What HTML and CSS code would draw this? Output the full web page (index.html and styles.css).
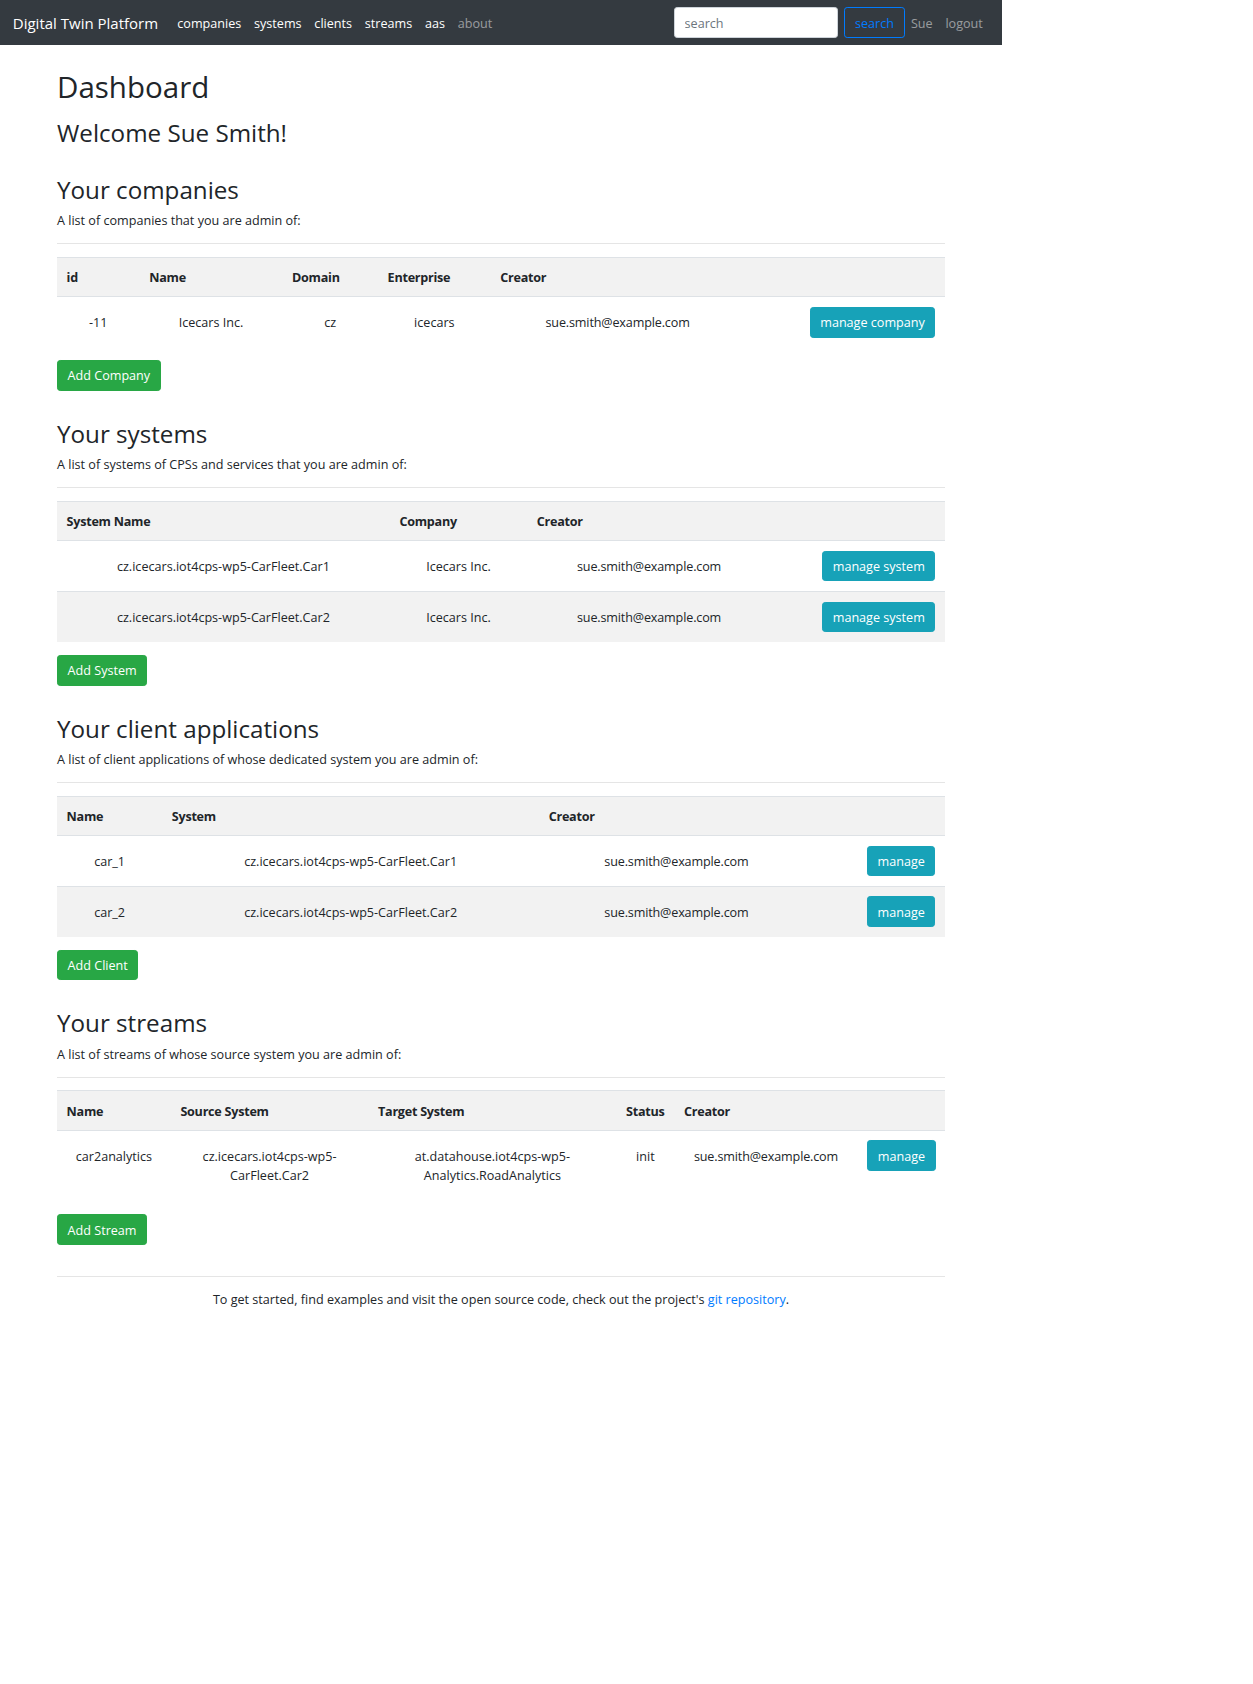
FILE: index.html
```html
<!DOCTYPE html>
<html lang="en">
<head>
<meta charset="utf-8">
<title>Digital Twin Platform</title>
<link rel="stylesheet" href="styles.css">
</head>
<body>
<div class="page">
  <nav class="navbar">
    <a class="brand" href="#">Digital Twin Platform</a>
    <ul class="nav nav-main">
      <li><a class="nav-link active" href="#">companies</a></li>
      <li><a class="nav-link active" href="#">systems</a></li>
      <li><a class="nav-link active" href="#">clients</a></li>
      <li><a class="nav-link active" href="#">streams</a></li>
      <li><a class="nav-link active" href="#">aas</a></li>
      <li><a class="nav-link" href="#">about</a></li>
    </ul>
    <form class="search-form">
      <input class="search-input" type="search" placeholder="search">
      <button class="btn btn-outline" type="button">search</button>
    </form>
    <ul class="nav">
      <li><a class="nav-link" href="#">Sue</a></li>
      <li><a class="nav-link" href="#">logout</a></li>
    </ul>
  </nav>

  <main class="container">
    <h1 class="title">Dashboard</h1>
    <h2 class="welcome">Welcome Sue Smith!</h2>

    <section class="section first">
      <h2 class="section-title">Your companies</h2>
      <p class="lead-text">A list of companies that you are admin of:</p>
      <hr class="rule">
      <table class="table">
        <colgroup>
          <col class="w-co-id"><col class="w-co-name"><col class="w-co-domain"><col class="w-co-ent"><col class="w-co-creator"><col class="w-co-act">
        </colgroup>
        <thead>
          <tr><th>id</th><th>Name</th><th>Domain</th><th>Enterprise</th><th>Creator</th><th></th></tr>
        </thead>
        <tbody>
          <tr><td>-11</td><td>Icecars Inc.</td><td>cz</td><td>icecars</td><td class="email">sue.smith@example.com</td><td class="act"><a class="btn btn-info" href="#">manage company</a></td></tr>
        </tbody>
      </table>
      <a class="btn btn-success" href="#">Add Company</a>
    </section>

    <section class="section">
      <h2 class="section-title">Your systems</h2>
      <p class="lead-text">A list of systems of CPSs and services that you are admin of:</p>
      <hr class="rule">
      <table class="table">
        <colgroup>
          <col class="w-sy-name"><col class="w-sy-co"><col class="w-sy-creator"><col class="w-sy-act">
        </colgroup>
        <thead>
          <tr><th>System Name</th><th>Company</th><th>Creator</th><th></th></tr>
        </thead>
        <tbody>
          <tr><td>cz.icecars.iot4cps-wp5-CarFleet.Car1</td><td>Icecars Inc.</td><td class="email">sue.smith@example.com</td><td class="act"><a class="btn btn-info" href="#">manage system</a></td></tr>
          <tr class="striped"><td>cz.icecars.iot4cps-wp5-CarFleet.Car2</td><td>Icecars Inc.</td><td class="email">sue.smith@example.com</td><td class="act"><a class="btn btn-info" href="#">manage system</a></td></tr>
        </tbody>
      </table>
      <a class="btn btn-success" href="#">Add System</a>
    </section>

    <section class="section">
      <h2 class="section-title">Your client applications</h2>
      <p class="lead-text">A list of client applications of whose dedicated system you are admin of:</p>
      <hr class="rule">
      <table class="table">
        <colgroup>
          <col class="w-cl-name"><col class="w-cl-sys"><col class="w-cl-creator"><col class="w-cl-act">
        </colgroup>
        <thead>
          <tr><th>Name</th><th>System</th><th>Creator</th><th></th></tr>
        </thead>
        <tbody>
          <tr><td>car_1</td><td>cz.icecars.iot4cps-wp5-CarFleet.Car1</td><td class="email">sue.smith@example.com</td><td class="act"><a class="btn btn-info" href="#">manage</a></td></tr>
          <tr class="striped"><td>car_2</td><td>cz.icecars.iot4cps-wp5-CarFleet.Car2</td><td class="email">sue.smith@example.com</td><td class="act"><a class="btn btn-info" href="#">manage</a></td></tr>
        </tbody>
      </table>
      <a class="btn btn-success" href="#">Add Client</a>
    </section>

    <section class="section">
      <h2 class="section-title">Your streams</h2>
      <p class="lead-text">A list of streams of whose source system you are admin of:</p>
      <hr class="rule">
      <table class="table table-streams">
        <colgroup>
          <col class="w-st-name"><col class="w-st-src"><col class="w-st-tgt"><col class="w-st-status"><col class="w-st-creator"><col class="w-st-act">
        </colgroup>
        <thead>
          <tr><th>Name</th><th>Source System</th><th>Target System</th><th>Status</th><th>Creator</th><th></th></tr>
        </thead>
        <tbody>
          <tr><td>car2analytics</td><td>cz.icecars.iot4cps-wp5-CarFleet.Car2</td><td>at.datahouse.iot4cps-wp5-Analytics.RoadAnalytics</td><td>init</td><td class="email">sue.smith@example.com</td><td class="act"><a class="btn btn-info" href="#">manage</a></td></tr>
        </tbody>
      </table>
      <a class="btn btn-success" href="#">Add Stream</a>
    </section>

    <footer class="footer">
      <hr class="rule">
      <p class="footer-text">To get started, find examples and visit the open source code, check out the project's <a href="#" class="link">git repository</a>.</p>
    </footer>
  </main>
</div>
</body>
</html>
```
FILE: styles.css
```css
* { box-sizing: border-box; }

html, body {
  margin: 0;
  padding: 0;
  background: #fff;
}

body {
  font-family: "Open Sans", "Noto Sans", sans-serif;
  font-size: 12.6px;
  line-height: 19.2px;
  color: #212529;
}

.page {
  width: 1002px;
}

/* ---------- navbar ---------- */
.navbar {
  display: flex;
  align-items: center;
  height: 45px;
  padding: 0 12.8px;
  background: #343a40;
}

.brand {
  color: #fff;
  text-decoration: none;
  font-size: 15px;
  line-height: 24px;
  padding: 4px 0;
  margin-right: 12.8px;
  white-space: nowrap;
}

.nav {
  display: flex;
  list-style: none;
  margin: 0;
  padding: 0;
}

.nav-main {
  margin-right: auto;
}

.nav-link {
  display: block;
  padding: 7.4px 6.4px 5.4px;
  color: rgba(255, 255, 255, 0.5);
  text-decoration: none;
  white-space: nowrap;
}

.nav-link.active {
  color: #fff;
}

.search-form {
  display: flex;
  align-items: center;
}

.search-input {
  width: 164px;
  height: 30.4px;
  padding: 5.4px 9.6px 4.2px;
  margin: 0 6.4px 0 0;
  font-family: inherit;
  font-size: 12.6px;
  line-height: 19.2px;
  color: #495057;
  background: #fff;
  border: 1px solid #ced4da;
  border-radius: 3.2px;
  outline: none;
}

.search-input::placeholder {
  color: #6c757d;
  opacity: 1;
}

/* ---------- buttons ---------- */
.btn {
  display: inline-block;
  padding: 5.4px 9.6px 4.2px;
  font-family: inherit;
  font-size: 12.6px;
  line-height: 19.2px;
  font-weight: 400;
  text-align: center;
  white-space: nowrap;
  border: 1px solid transparent;
  border-radius: 3.2px;
  text-decoration: none;
  cursor: pointer;
}

.btn-outline {
  color: #007bff;
  background: transparent;
  border-color: #007bff;
}

.btn-info {
  color: #fff;
  background: #17a2b8;
  border-color: #17a2b8;
}

.btn-success {
  color: #fff;
  background: #28a745;
  border-color: #28a745;
}

/* ---------- content ---------- */
.container {
  display: block;
  width: 912px;
  margin: 0 auto;
  padding: 23px 12px 0;
}

.title {
  margin: 0;
  font-size: 29.5px;
  line-height: 38.4px;
  font-weight: 400;
}

.welcome {
  margin: 11.6px 0 0;
  font-size: 24.2px;
  line-height: 30.7px;
  font-weight: 400;
}

.section {
  margin-top: 27px;
}

.section.first {
  margin-top: 25.3px;
}

.section-title {
  margin: 0 0 5.4px;
  padding-top: 1px;
  font-size: 24.2px;
  line-height: 30.7px;
  font-weight: 400;
}

.lead-text {
  margin: 0 0 12.8px;
}

.rule {
  height: 0;
  margin: 0 0 12.8px;
  border: 0;
  border-top: 1px solid rgba(0, 0, 0, 0.1);
}

/* ---------- tables ---------- */
.table {
  width: 888px;
  table-layout: fixed;
  border-collapse: collapse;
  margin-bottom: 12.8px;
}

.table th,
.table td {
  padding: 9.6px;
  border-top: 1px solid #dee2e6;
}

.table th {
  padding-top: 10.6px;
  padding-bottom: 8.6px;
  text-align: left;
  vertical-align: bottom;
  font-weight: 700;
  letter-spacing: -0.25px;
  white-space: nowrap;
  background: #f2f2f2;
  border-bottom: 1px solid #dee2e6;
}

.table td {
  text-align: center;
  vertical-align: baseline;
}

.table td.email {
  letter-spacing: -0.15px;
}

.table td.act {
  text-align: right;
}

.table tr.striped td {
  background: #f2f2f2;
}

.table-streams {
  margin-bottom: 19.5px;
}

.w-co-id { width: 82.6px; }
.w-co-name { width: 142.8px; }
.w-co-domain { width: 95.6px; }
.w-co-ent { width: 112.7px; }
.w-co-creator { width: 253.8px; }
.w-co-act { width: 200.5px; }

.w-sy-name { width: 332.8px; }
.w-sy-co { width: 137.4px; }
.w-sy-creator { width: 243.7px; }
.w-sy-act { width: 174.1px; }

.w-cl-name { width: 105.2px; }
.w-cl-sys { width: 376.9px; }
.w-cl-creator { width: 274.6px; }
.w-cl-act { width: 131.3px; }

.w-st-name { width: 113.8px; }
.w-st-src { width: 197.6px; }
.w-st-tgt { width: 248px; }
.w-st-status { width: 58px; }
.w-st-creator { width: 183.2px; }
.w-st-act { width: 87.4px; }

/* ---------- footer ---------- */
.footer {
  margin-top: 31.5px;
}

.footer-text {
  margin: 0;
  text-align: center;
}

.link {
  color: #007bff;
  text-decoration: none;
}
```
